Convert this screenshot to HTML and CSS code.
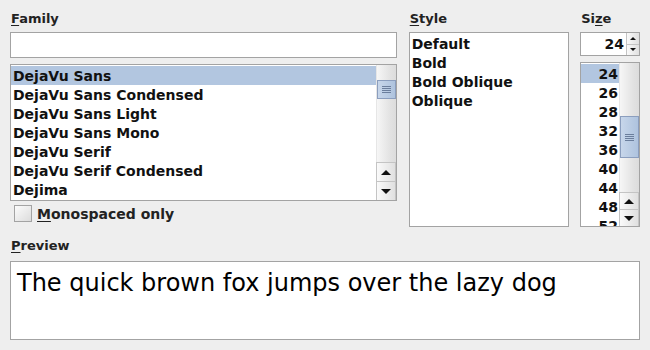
FILE: index.html
```html
<!DOCTYPE html>
<html lang="en">
<head>
  <meta charset="UTF-8">
  <title>Font Chooser</title>
  <link rel="stylesheet" href="styles.css">
</head>
<body>
  <div class="dialog">
    <div class="top">
      <!-- Family -->
      <div class="col family">
        <div class="label"><u>F</u>amily</div>
        <div class="field"></div>
        <div class="list family-list">
          <div class="items">
            <div class="item selected">DejaVu Sans</div>
            <div class="item">DejaVu Sans Condensed</div>
            <div class="item">DejaVu Sans Light</div>
            <div class="item">DejaVu Sans Mono</div>
            <div class="item">DejaVu Serif</div>
            <div class="item">DejaVu Serif Condensed</div>
            <div class="item">Dejima</div>
          </div>
          <div class="scrollbar">
            <div class="track">
              <div class="thumb fam-thumb"><span class="grip"></span></div>
            </div>
            <div class="btn"><span class="arrow up"></span></div>
            <div class="btn"><span class="arrow down"></span></div>
          </div>
        </div>
        <label class="check">
          <span class="box"></span>
          <span><u>M</u>onospaced only</span>
        </label>
      </div>

      <!-- Style -->
      <div class="col style">
        <div class="label"><u>S</u>tyle</div>
        <div class="list style-list">
          <div class="items">
            <div class="item">Default</div>
            <div class="item">Bold</div>
            <div class="item">Bold Oblique</div>
            <div class="item">Oblique</div>
          </div>
        </div>
      </div>

      <!-- Size -->
      <div class="col size">
        <div class="label">Si<u>z</u>e</div>
        <div class="spinner">
          <div class="spin-value">24</div>
          <div class="spin-btns">
            <div class="spin-btn"><span class="arrow sm up"></span></div>
            <div class="spin-btn"><span class="arrow sm down"></span></div>
          </div>
        </div>
        <div class="list size-list">
          <div class="items num">
            <div class="item selected">24</div>
            <div class="item">26</div>
            <div class="item">28</div>
            <div class="item">32</div>
            <div class="item">36</div>
            <div class="item">40</div>
            <div class="item">44</div>
            <div class="item">48</div>
            <div class="item">52</div>
          </div>
          <div class="scrollbar">
            <div class="track">
              <div class="thumb size-thumb"><span class="grip"></span></div>
            </div>
            <div class="btn small"><span class="arrow up"></span></div>
            <div class="btn small"><span class="arrow down"></span></div>
          </div>
        </div>
      </div>
    </div>

    <!-- Preview -->
    <div class="label preview-label"><u>P</u>review</div>
    <div class="preview">The quick brown fox jumps over the lazy dog</div>
  </div>
</body>
</html>
```

FILE: styles.css
```css
body {
  margin: 0;
  background: #eeeeee;
  font-family: "DejaVu Sans", sans-serif;
  color: #000;
}

.dialog {
  padding: 6px 10px 0 10px;
}

.top {
  display: flex;
  gap: 12px;
}

.col {
  display: flex;
  flex-direction: column;
}

.family { width: 388px; }
.style  { width: 161px; }
.size   { width: 60px; margin-left: -1px; }

.label {
  height: 26px;
  line-height: 26px;
  font-size: 13px;
  font-weight: bold;
  padding-left: 1px;
  color: #222;
}

.label u {
  text-decoration-thickness: 1px;
  text-underline-offset: 2px;
}

.field {
  height: 24px;
  background: #fff;
  border: 1px solid #a3a3a3;
}

.list {
  display: flex;
  background: #fff;
  border: 1px solid #a3a3a3;
  overflow: hidden;
}

.family-list {
  margin-top: 6px;
  height: 135px;
}

.style-list {
  height: 193px;
}

.size-list {
  margin-top: 6px;
  height: 163px;
}

.items {
  flex: 1;
  overflow: hidden;
  padding-top: 1px;
  color: #111;
}

.item {
  height: 19px;
  line-height: 20px;
  font-size: 14px;
  font-weight: bold;
  padding-left: 2px;
  white-space: nowrap;
}

.style-list .items { padding-top: 1px; }

.num .item {
  text-align: right;
  padding-right: 1px;
}

.item.selected {
  background: #b2c6e0;
}

/* scrollbar */
.scrollbar {
  width: 20px;
  display: flex;
  flex-direction: column;
}

.track {
  flex: 1;
  background: linear-gradient(to right, #f6f6f6, #e2e2e2 70%, #dcdcdc);
  border-left: 1px solid #e6e6e6;
}

.thumb {
  height: 17px;
  border: 1px solid #8b9ebe;
  background: linear-gradient(to right, #c7d6ea, #aec3de);
  display: flex;
  align-items: center;
  justify-content: center;
}

.fam-thumb  { margin-top: 15px; }
.size-thumb { margin-top: 53px; height: 40px; }

.grip {
  width: 9px;
  height: 7px;
  background: repeating-linear-gradient(to bottom, #6b7e9c 0, #6b7e9c 1px, transparent 1px, transparent 2px);
}

.btn {
  height: 18px;
  border: 1px solid #c4c4c4;
  border-bottom: none;
  background: linear-gradient(to right, #fafafa, #e0e0e0);
  display: flex;
  align-items: center;
  justify-content: center;
}

.btn.small { height: 16px; }

.arrow {
  width: 0;
  height: 0;
  border-left: 5px solid transparent;
  border-right: 5px solid transparent;
}

.arrow.up   { border-bottom: 5px solid #111; }
.arrow.down { border-top: 5px solid #111; }

.arrow.sm {
  border-left-width: 3px;
  border-right-width: 3px;
}
.arrow.sm.up   { border-bottom-width: 3px; }
.arrow.sm.down { border-top-width: 3px; }

/* spinner */
.spinner {
  display: flex;
  height: 22px;
  background: #fff;
  border: 1px solid #a3a3a3;
}

.spin-value {
  flex: 1;
  text-align: right;
  font-size: 14px;
  font-weight: bold;
  line-height: 23px;
  padding-right: 2px;
  color: #111;
}

.spin-btns {
  width: 13px;
  display: flex;
  flex-direction: column;
}

.spin-btn {
  flex: 1;
  border-left: 1px solid #c4c4c4;
  border-top: 1px solid #c4c4c4;
  background: linear-gradient(to right, #fafafa, #e0e0e0);
  display: flex;
  align-items: center;
  justify-content: center;
}

.spin-btn:first-child { border-top: none; }

/* checkbox */
.check {
  display: flex;
  align-items: center;
  gap: 5px;
  margin-top: 4px;
  padding-left: 4px;
  font-size: 14px;
  font-weight: bold;
  color: #222;
}

.check u {
  text-underline-offset: 2px;
}

.box {
  width: 16px;
  height: 15px;
  border: 1px solid #a3a3a3;
  background: linear-gradient(to bottom right, #fbfbfb, #dcdcdc);
}

/* preview */
.preview-label {
  margin-top: 6px;
  height: 28px;
}

.preview {
  height: 70px;
  background: #fff;
  border: 1px solid #a3a3a3;
  font-size: 24px;
  line-height: 30px;
  padding: 6px 0 1px 6px;
}
```
